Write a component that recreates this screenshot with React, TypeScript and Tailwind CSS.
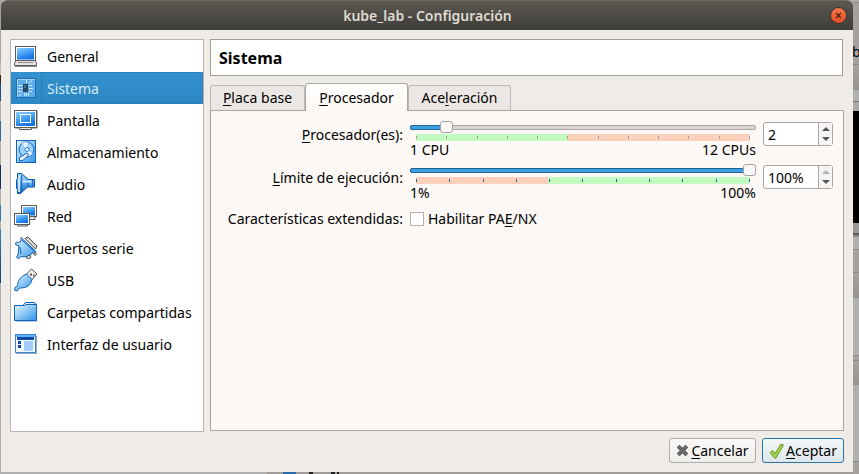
import { useId, useState } from "react";
import type { ReactNode } from "react";

function Defs() {
  return (
    <svg className="absolute size-0" aria-hidden="true">
      <defs>
        <linearGradient id="screen" x1="0" y1="0" x2="0.5" y2="1">
          <stop offset="0" stopColor="#8fcbff" />
          <stop offset="0.5" stopColor="#4aa3f8" />
          <stop offset="1" stopColor="#1173e6" />
        </linearGradient>
        <linearGradient id="soft" x1="0" y1="0" x2="1" y2="1">
          <stop offset="0" stopColor="#e8f5ff" />
          <stop offset="0.5" stopColor="#8cc8f7" />
          <stop offset="1" stopColor="#2e8de6" />
        </linearGradient>
        <linearGradient id="horn" x1="0" y1="0" x2="0" y2="1">
          <stop offset="0" stopColor="#9fd2fb" />
          <stop offset="0.4" stopColor="#6db5f3" />
          <stop offset="1" stopColor="#0a5fc4" />
        </linearGradient>
      </defs>
    </svg>
  );
}

function Icon({ children }: { children: ReactNode }) {
  return (
    <svg viewBox="0 0 24 24" className="size-6 shrink-0" aria-hidden="true">
      {children}
    </svg>
  );
}

const icons: Record<string, ReactNode> = {
  general: (
    <Icon>
      <rect x="1.5" y="2.5" width="20" height="14" fill="#fff" stroke="#5a5a5a" />
      <rect x="3" y="4" width="17" height="11.5" fill="url(#screen)" />
      <path d="M2.5 16.5h18l2 2.500v2.500h-22v-2.500z" fill="#e9e5e3" stroke="#5a5a5a" />
      <path d="M4 18.500h15M1 22.500h22" stroke="#8d8987" />
    </Icon>
  ),
  sistema: (
    <Icon>
      <rect x="2.500" y="2.500" width="19" height="19" fill="#5cabea" stroke="#1c6cb4" />
      <path d="M3.500 21V3.500H21" stroke="#a6d4f8" fill="none" />
      <rect x="9" y="8" width="5" height="8" fill="#27455f" />
      <rect x="10" y="9" width="2" height="3" fill="#4b7491" />
      <path d="M4.500 9.500h4M4.500 12.500h4M4.500 15.500h4M15 9.500h3M15 12.500h4M15 15.500h3M10.500 17v3M12.500 17v3M14.500 17v3M12.500 4v3M15 7l3-2.500M5 20l2.500-2.500" stroke="#cfe8fb" fill="none" />
    </Icon>
  ),
  pantalla: (
    <Icon>
      <path d="M1 20.500h22M23.500 3v17" stroke="#b5b1ae" />
      <rect x="0.500" y="2.500" width="22" height="17" fill="#fff" stroke="#5a5a5a" />
      <rect x="2" y="4" width="19" height="14" fill="url(#screen)" />
      <rect x="6.500" y="6.500" width="10" height="8" fill="none" stroke="#fff" />
      <path d="M5.500 20v1.500h12V20" fill="#e9e5e3" stroke="#5a5a5a" />
    </Icon>
  ),
  almacenamiento: (
    <Icon>
      <rect x="2.500" y="0.500" width="19" height="22" fill="url(#soft)" stroke="#1263b8" />
      <circle cx="12.500" cy="9.500" r="7.500" fill="#9cd0f8" stroke="#1263b8" />
      <path d="M12.500 9.500 8 3.500a7 7 0 0 1 6-1zM12.500 9.500l6 4a7 7 0 0 1-5 3z" fill="#e6f4ff" />
      <circle cx="13" cy="9.500" r="2" fill="#fff" stroke="#1978d2" />
      <path d="M5.500 17.500l8-4.500 1 2-5 5-4 1z" fill="#eef7ff" stroke="#1263b8" />
    </Icon>
  ),
  audio: (
    <Icon>
      <path d="M2.500 8v8l1 1.500v4h3l7-6.500h7V7.500h-6l-7-6h-4v5z" fill="url(#horn)" stroke="#0b55a8" />
      <path d="M7.500 3v17" stroke="#1768bd" />
      <path d="M5 3v17" stroke="#c4e4fd" strokeWidth="2" />
      <path d="M14 7.500v8M18.500 8v7" stroke="#1768bd" />
      <path d="M8.500 9.500h9" stroke="#cdebff" strokeWidth="2" />
    </Icon>
  ),
  red: (
    <Icon>
      <path d="M10 13v2.500h11V13" fill="#e9e5e3" stroke="#5a5a5a" />
      <rect x="7.500" y="1.500" width="15" height="11" fill="#fff" stroke="#5a5a5a" />
      <rect x="9" y="3" width="12" height="8.500" fill="url(#screen)" />
      <path d="M3.500 20v2h10v-2" fill="#e9e5e3" stroke="#5a5a5a" />
      <rect x="0.500" y="9.500" width="15" height="11" fill="#fff" stroke="#5a5a5a" />
      <rect x="2" y="11" width="12" height="8" fill="url(#screen)" />
    </Icon>
  ),
  serie: (
    <Icon>
      <path d="M11 2.500l3-1.500 9 9-1.500 3z" fill="#d9d5d2" stroke="#4a4a4a" />
      <path d="M7 1.500l15 14-1.500 2-2-1-3.500 4.500-8.500-.500-2 2.500-2-2 1.500-2L5 9.500 2 9l-.500-2L7 5.500z" fill="url(#soft)" stroke="#0f5fb4" />
      <path d="M8 4l12 11M6 11l1 7" stroke="#0f5fb4" fill="none" />
      <path d="M12 21.500l3-2.500 2 2-2 2zM19 17.500l2-1 1.500 1.500-1.500 1.500z" fill="#d9d5d2" stroke="#4a4a4a" />
    </Icon>
  ),
  usb: (
    <Icon>
      <path d="M12 6.500l5.500-5.500 5.500 5-5.500 6z" fill="#f1efed" stroke="#4f4f4f" />
      <path d="M16 5.500h2v2h-2zM19 6.500h1.500v2H19z" fill="#4f4f4f" />
      <path d="M9.500 7.500l3-1.500 5.500 5.500-1.500 4c-3 4-7 4.500-11 4.500L3 23l-2.500-1 .500-2.500L3.500 18c0-4 2-8 6-10.500z" fill="url(#soft)" stroke="#0f5fb4" />
    </Icon>
  ),
  carpetas: (
    <Icon>
      <path d="M9.500 4.500l2-2h9l2 2V9h-13z" fill="#cbe7fd" stroke="#0f64bb" />
      <path d="M.500 5.500h10l1.500-1h10.500v16H.500z" fill="url(#soft)" stroke="#0f64bb" />
      <path d="M2 21.500h22" stroke="#b8cfe4" />
    </Icon>
  ),
  interfaz: (
    <Icon>
      <rect x="1.500" y="2.500" width="20" height="18" fill="#f4f9ff" stroke="#3a86d4" />
      <rect x="2" y="3" width="19" height="2" fill="#5fb0f5" />
      <rect x="3" y="5" width="17" height="3" fill="#0b4aa6" />
      <path d="M4 9h3v3H4zM4 13h3v3H4z" fill="#0b4aa6" />
      <rect x="10" y="9" width="9" height="10" fill="#a3cbff" />
      <path d="M2 21.500h21M22.500 4v17" stroke="#9aa6b4" />
    </Icon>
  ),
};

const sections = [
  { id: "general", label: "General" },
  { id: "sistema", label: "Sistema" },
  { id: "pantalla", label: "Pantalla" },
  { id: "almacenamiento", label: "Almacenamiento" },
  { id: "audio", label: "Audio" },
  { id: "red", label: "Red" },
  { id: "serie", label: "Puertos serie" },
  { id: "usb", label: "USB" },
  { id: "carpetas", label: "Carpetas compartidas" },
  { id: "interfaz", label: "Interfaz de usuario" },
];

function Key({ children }: { children: string }) {
  return <span className="underline decoration-1 underline-offset-2">{children}</span>;
}

function Sidebar({ current, onSelect }: { current: string; onSelect: (id: string) => void }) {
  return (
    <nav className="w-[194px] shrink-0 border border-[#b6b3b0] bg-white">
      {sections.map((s) => (
        <button
          key={s.id}
          type="button"
          onClick={() => onSelect(s.id)}
          className={
            s.id === current
              ? "flex h-8 w-full items-center bg-linear-to-b from-[#3391cf] to-[#2c87c2] pl-[3px] text-left text-[#d8ecf9]"
              : "flex h-8 w-full items-center pl-[3px] text-left text-black"
          }
        >
          {icons[s.id]}
          <span
            className={
              s.id === current
                ? "ml-[3px] flex h-8 flex-1 items-center border border-[#2a7fb8] pt-0.5 pl-[5px]"
                : "ml-[3px] flex h-8 flex-1 items-center border border-transparent pt-0.5 pl-[5px]"
            }
          >
            {s.label}
          </span>
        </button>
      ))}
    </nav>
  );
}

const tabs = [
  { id: "placa", text: <><Key>P</Key>laca base</>, width: "w-[95px]" },
  { id: "procesador", text: <><Key>P</Key>rocesador</>, width: "w-[103px]" },
  { id: "aceleracion", text: <>Ace<Key>l</Key>eración</>, width: "w-[103px]" },
];

function Tabs({ current, onSelect }: { current: string; onSelect: (id: string) => void }) {
  return (
    <div role="tablist" className="flex h-7 items-end">
      {tabs.map((t) => (
        <button
          key={t.id}
          type="button"
          role="tab"
          aria-selected={t.id === current}
          onClick={() => onSelect(t.id)}
          className={
            t.id === current
              ? `${t.width} z-10 -mb-px h-7 rounded-t-[3px] border border-b-0 border-[#aaa6a3] bg-linear-to-b from-white to-[#fcf8f5] text-center`
              : `${t.width} h-[25px] rounded-t-[3px] border border-b-0 border-[#bdb9b6] bg-[#ebe7e4] text-center`
          }
        >
          {t.text}
        </button>
      ))}
    </div>
  );
}

interface MeterProps {
  id: string;
  min: number;
  max: number;
  value: number;
  steps: number;
  split: number;
  colors: [string, string];
  tick: string;
  low: string;
  high: string;
  onChange: (v: number) => void;
}

function Meter({ id, min, max, value, steps, split, colors, tick, low, high, onChange }: MeterProps) {
  const ratio = (value - min) / (max - min);
  return (
    <div>
      <div className="grid h-[14px] items-center">
        <div className="col-start-1 row-start-1 h-[5px] overflow-hidden rounded-[2px] border border-[#aaa6a3] bg-[#dad6d3]">
          <div className="h-full bg-[#3b9fe0] ring-1 ring-[#1e6699]" style={{ width: `${ratio * 100}%` }} />
        </div>
        <div
          className="z-[1] col-start-1 row-start-1 h-[5px] rounded-[2px] border border-[#1e6699] bg-[#3b9fe0]"
          style={{ width: `${ratio * 100}%` }}
        />
        <input
          id={id}
          type="range"
          min={min}
          max={max}
          value={value}
          onChange={(e) => onChange(Number(e.target.value))}
          className="z-10 col-start-1 row-start-1 h-3 w-full appearance-none bg-transparent [&::-webkit-slider-thumb]:h-3 [&::-webkit-slider-thumb]:w-[13px] [&::-webkit-slider-thumb]:appearance-none [&::-webkit-slider-thumb]:rounded-[3px] [&::-webkit-slider-thumb]:border [&::-webkit-slider-thumb]:border-[#a5a19e] [&::-webkit-slider-thumb]:bg-[#f9f8f7]"
        />
      </div>
      <div className="mx-[6px] flex h-[7px]">
        <div className={colors[0]} style={{ width: `${split * 100}%` }} />
        <div className={`${colors[1]} flex-1`} />
      </div>
      <div className="mx-[6px] -mt-[5px] mb-[2px] flex h-[3px] justify-between">
        {Array.from({ length: steps + 1 }, (_, i) => (
          <span key={i} className={`w-px ${tick}`} />
        ))}
      </div>
      <div className="flex h-[18px] items-center justify-between">
        <span>{low}</span>
        <span>{high}</span>
      </div>
    </div>
  );
}

interface SpinProps {
  label: string;
  value: number;
  min: number;
  max: number;
  suffix?: string;
  onChange: (v: number) => void;
}

function Spin({ label, value, min, max, suffix = "", onChange }: SpinProps) {
  const set = (v: number) => onChange(Math.min(max, Math.max(min, v)));
  return (
    <div className="mt-[2px] flex h-6 rounded-[3px] border border-[#aaa6a3] bg-white">
      <input
        aria-label={label}
        value={`${value}${suffix}`}
        onChange={(e) => set(parseInt(e.target.value, 10) || min)}
        className="w-0 flex-1 bg-transparent pt-0.5 pl-1 outline-none"
      />
      <div className="flex w-[14px] flex-col border-l border-[#aaa6a3] bg-[#f7f5f3] text-[#555]">
        <button
          type="button"
          aria-label={`Aumentar ${label}`}
          disabled={value >= max}
          onClick={() => set(value + 1)}
          className="flex flex-1 items-end justify-center pb-[3px] disabled:text-[#b5b2b0]"
        >
          <svg viewBox="0 0 8 4" className="h-1 w-2" aria-hidden="true">
            <path d="M4 0l4 4H0z" fill="currentColor" />
          </svg>
        </button>
        <button
          type="button"
          aria-label={`Disminuir ${label}`}
          disabled={value <= min}
          onClick={() => set(value - 1)}
          className="flex flex-1 items-start justify-center pt-[3px] disabled:text-[#b5b2b0]"
        >
          <svg viewBox="0 0 8 4" className="h-1 w-2" aria-hidden="true">
            <path d="M0 0h8L4 4z" fill="currentColor" />
          </svg>
        </button>
      </div>
    </div>
  );
}

function Processor() {
  const id = useId();
  const [cpus, setCpus] = useState(2);
  const [cap, setCap] = useState(100);
  const [pae, setPae] = useState(false);
  return (
    <div className="grid grid-cols-[181px_1fr_70px] gap-x-[7px] gap-y-1">
      <label htmlFor={`${id}-cpu`} className="mt-1.5 text-right whitespace-nowrap">
        <Key>P</Key>rocesador(es):
      </label>
      <Meter
        id={`${id}-cpu`}
        min={1}
        max={12}
        value={cpus}
        steps={11}
        split={5 / 11}
        colors={["bg-[#c3fabf]", "bg-[#fdd0bc]"]}
        tick="bg-[#a09c99]"
        low="1 CPU"
        high="12 CPUs"
        onChange={setCpus}
      />
      <Spin label="Procesadores" value={cpus} min={1} max={12} onChange={setCpus} />
      <label htmlFor={`${id}-cap`} className="mt-1.5 text-right whitespace-nowrap">
        <Key>L</Key>ímite de ejecución:
      </label>
      <Meter
        id={`${id}-cap`}
        min={1}
        max={100}
        value={cap}
        steps={10}
        split={39 / 99}
        colors={["bg-[#fdd0bc]", "bg-[#c3fabf]"]}
        tick="bg-[#1e6699]"
        low="1%"
        high="100%"
        onChange={setCap}
      />
      <Spin label="Límite de ejecución" value={cap} min={1} max={100} suffix="%" onChange={setCap} />
      <span className="mt-1 flex justify-end whitespace-nowrap">Características extendidas:</span>
      <label className="mt-1 flex items-center gap-1 whitespace-nowrap">
        <input
          type="checkbox"
          checked={pae}
          onChange={(e) => setPae(e.target.checked)}
          className="size-[14px] appearance-none border border-[#b5b1ae] bg-white checked:bg-[#3391cf]"
        />
        <span>
          Habilitar PA<Key>E</Key>/NX
        </span>
      </label>
    </div>
  );
}

function TitleBar() {
  return (
    <header className="flex h-[30px] items-center rounded-t-md border-t border-[#6b6a62] bg-linear-to-b from-[#5a5850] to-[#3e3d38] pr-1.5 pl-6">
      <h1 className="flex-1 text-center font-semibold text-[#dfdbd2]">kube_lab - Configuración</h1>
      <button
        type="button"
        aria-label="Cerrar"
        className="flex size-[17px] items-center justify-center rounded-full border border-[#33322e] bg-linear-to-b from-[#f4764c] to-[#e2501f]"
      >
        <svg viewBox="0 0 7 7" className="size-[7px]" aria-hidden="true">
          <path d="M1 1l5 5M6 1L1 6" stroke="#4a2012" strokeWidth="1.200" />
        </svg>
      </button>
    </header>
  );
}

function Footer() {
  return (
    <footer className="flex h-[25px] justify-end gap-1.5">
      <button
        type="button"
        className="flex w-[87px] items-center justify-center gap-0.5 rounded-[3px] border border-[#b0acaa] bg-linear-to-b from-[#fbfaf9] to-[#efedeb]"
      >
        <svg viewBox="0 0 12 12" className="size-[13px] shrink-0" aria-hidden="true">
          <path d="M2 2l8 8M10 2l-8 8" stroke="#555" strokeWidth="3.600" />
          <path d="M2 2l8 8M10 2l-8 8" stroke="#6c6c6c" strokeWidth="2" />
        </svg>
        <span>
          <Key>C</Key>ancelar
        </span>
      </button>
      <button
        type="button"
        className="flex w-[82px] items-center justify-center gap-0.5 rounded-[3px] border border-[#2a75a8] bg-linear-to-b from-[#f5f8f9] to-[#dde6ea]"
      >
        <svg viewBox="0 0 15 16" className="h-4 w-[15px] shrink-0" aria-hidden="true">
          <path d="M1 9.500l2.500-2 2.500 3L12 1l2.500 1L7 15H5.500z" fill="#a5cf4c" stroke="#6b9c26" />
        </svg>
        <span>
          <Key>A</Key>ceptar
        </span>
      </button>
    </footer>
  );
}

function BackdropRight() {
  return (
    <div className="flex w-1.5 shrink-0 flex-col overflow-hidden bg-[#a5a19e]" aria-hidden="true">
      <div className="h-0.5 bg-[#aeaaa7]" />
      <div className="h-px bg-[#8f8b88]" />
      <div className="h-10" />
      <div className="-ml-px h-[21px] text-black">b</div>
      <div className="h-px bg-[#8f8b88]" />
      <div className="h-[25px] bg-linear-to-b from-[#a5a19e] to-[#989390]" />
      <div className="h-[11px] bg-[#b0b0b0]" />
      <div className="h-px bg-[#777]" />
      <div className="h-[9px] bg-[#a9a9a9]" />
      <div className="h-28 bg-black" />
      <div className="h-[10px] bg-[#999]" />
      <div className="h-1 bg-linear-to-b from-[#4d4d4d] to-[#999]" />
      <div className="h-3 bg-[#b0b0b0]" />
      <div className="h-px bg-[#8f8b88]" />
      <div className="h-[22px] bg-[#a5a19e]" />
      <div className="h-px bg-[#8f8b88]" />
      <div className="h-[25px] bg-linear-to-b from-[#a5a19e] to-[#989390]" />
      <div className="h-[57px] bg-[#b0b0b0]" />
      <div className="h-px bg-[#8f8b88]" />
      <div className="h-1 bg-[#a5a19e]" />
      <div className="h-px bg-[#8f8b88]" />
      <div className="h-6 bg-linear-to-b from-[#a5a19e] to-[#989390]" />
      <div className="h-[76px] bg-[#b0b0b0]" />
      <div className="h-px bg-[#8f8b88]" />
      <div className="flex-1 bg-[#a5a19e]" />
    </div>
  );
}

function BackdropLeft() {
  return (
    <div className="flex w-px shrink-0 flex-col bg-[#b0b0b0]" aria-hidden="true">
      <div className="h-[63px] bg-[#a5a19e]" />
      <div className="h-3 bg-[#c4c2c0]" />
      <div className="h-2 bg-[#3a2410]" />
      <div className="h-[18px] bg-[#1d4f86]" />
      <div className="h-5" />
      <div className="h-5 bg-[#2a6ca8]" />
      <div className="h-6" />
      <div className="h-6 bg-[#16325f]" />
      <div className="h-4" />
      <div className="h-4 bg-[#2a78b5]" />
      <div className="h-2" />
      <div className="h-[54px] bg-linear-to-b from-[#3a86bd] to-[#123c78]" />
    </div>
  );
}

function BackdropBottom() {
  return (
    <div className="flex h-0.5 bg-linear-to-r from-[#a09c99] to-[#a09c99]" aria-hidden="true">
      <div className="w-[266px] bg-[#b0b0b0]" />
      <div className="ml-4 w-[13px] bg-[#2c6cab]" />
      <div className="ml-[13px] w-1 bg-[#222]" />
      <div className="ml-[18px] w-1 bg-[#222]" />
      <div className="ml-0.5 w-0.5 bg-[#222]" />
    </div>
  );
}

export default function App() {
  const [section, setSection] = useState("sistema");
  const [tab, setTab] = useState("procesador");
  const title = sections.find((s) => s.id === section)?.label;
  return (
    <div className="flex min-h-screen bg-[#b0aeac] font-['Noto_Sans','Open_Sans',sans-serif] text-[14px] leading-[18px] text-black">
      <Defs />
      <BackdropLeft />
      <div className="flex min-w-0 flex-1 flex-col">
        <main className="flex flex-1 flex-col rounded-t-md bg-[#efebe7]">
          <TitleBar />
          <div className="flex flex-1 flex-col gap-1.5 px-[9px] pt-[9px] pb-[9px]">
            <div className="flex flex-1 gap-1.5">
              <Sidebar current={section} onSelect={setSection} />
              <section className="flex min-w-0 flex-1 flex-col pb-px">
                <h2 className="mr-px mb-1.5 flex h-[37px] items-center border border-[#a09d9a] bg-white px-2 text-[16px] font-bold">
                  {title}
                </h2>
                <Tabs current={tab} onSelect={setTab} />
                <div className="flex-1 border border-[#aaa6a3] bg-[#fcf8f5] pt-[9px] pr-[10px] pb-4 pl-[11px]">
                  {tab === "procesador" && <Processor />}
                </div>
              </section>
            </div>
            <Footer />
          </div>
        </main>
        <BackdropBottom />
      </div>
      <BackdropRight />
    </div>
  );
}
